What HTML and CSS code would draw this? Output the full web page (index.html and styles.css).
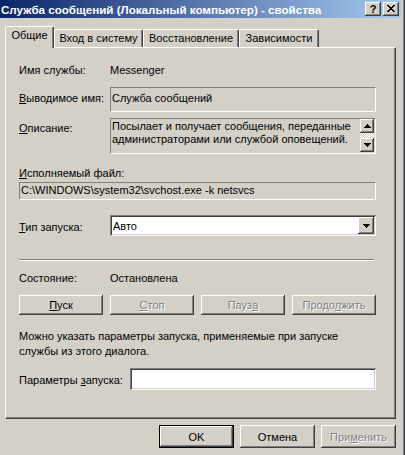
FILE: index.html
```html
<!DOCTYPE html>
<html lang="ru">
<head>
<meta charset="utf-8">
<title>Служба сообщений - свойства</title>
<link rel="stylesheet" href="styles.css">
</head>
<body>
<div class="window">
  <div class="titlebar">
    <span class="title">Служба сообщений (Локальный компьютер) - свойства</span>
    <div class="caption-btns">
      <div class="cbtn help">?</div>
      <div class="cbtn close">
        <svg width="8" height="7" viewBox="0 0 8 7" shape-rendering="crispEdges"><path d="M0 0h2v1h-2zM6 0h2v1h-2zM1 1h2v1h-2zM5 1h2v1h-2zM2 2h4v1h-4zM3 3h2v1h-2zM2 4h4v1h-4zM1 5h2v1h-2zM5 5h2v1h-2zM0 6h2v1h-2zM6 6h2v1h-2z" fill="#000"/></svg>
      </div>
    </div>
  </div>
  <div class="client">
    <div class="tabs">
      <div class="tab active t1">Общие</div>
      <div class="tab t2">Вход в систему</div>
      <div class="tab t3">Восстановление</div>
      <div class="tab t4">Зависимости</div>
    </div>
    <div class="panel">
      <div class="row r-name">
        <div class="label">Имя службы:</div>
        <div class="value">Messenger</div>
      </div>
      <div class="row r-display">
        <div class="label pt4"><u>В</u>ыводимое имя:</div>
        <div class="field ro display">Служба сообщений</div>
      </div>
      <div class="row r-desc">
        <div class="label pt3"><u>О</u>писание:</div>
        <div class="field ro desc">
          <div class="desc-text">Посылает и получает сообщения, переданные администраторами или службой оповещений.</div>
          <div class="vscroll">
            <div class="sbtn"><svg width="7" height="4" viewBox="0 0 7 4" shape-rendering="crispEdges"><path d="M3 0h1v1h-1zM2 1h3v1h-3zM1 2h5v1h-5zM0 3h7v1h-7z" fill="#000"/></svg></div>
            <div class="track"></div>
            <div class="sbtn"><svg width="7" height="4" viewBox="0 0 7 4" shape-rendering="crispEdges"><path d="M0 0h7v1h-7zM1 1h5v1h-5zM2 2h3v1h-3zM3 3h1v1h-1z" fill="#000"/></svg></div>
          </div>
        </div>
      </div>
      <div class="row r-exe-label">
        <div><u>И</u>сполняемый файл:</div>
      </div>
      <div class="field ro exe">C:\WINDOWS\system32\svchost.exe -k netsvcs</div>
      <div class="row r-type">
        <div class="label pt5"><u>Т</u>ип запуска:</div>
        <div class="combo">
          <span class="combo-text">Авто</span>
          <div class="dropbtn"><svg width="7" height="4" viewBox="0 0 7 4" shape-rendering="crispEdges"><path d="M0 0h7v1h-7zM1 1h5v1h-5zM2 2h3v1h-3zM3 3h1v1h-1z" fill="#000"/></svg></div>
        </div>
      </div>
      <div class="separator"></div>
      <div class="row r-status">
        <div class="label">Состояние:</div>
        <div class="value">Остановлена</div>
      </div>
      <div class="row r-actions">
        <div class="btn svc"><span><u>П</u>уск</span></div>
        <div class="btn svc disabled"><span><u>С</u>топ</span></div>
        <div class="btn svc disabled"><span>Пауз<u>а</u></span></div>
        <div class="btn svc disabled"><span>Продо<u>л</u>жить</span></div>
      </div>
      <p class="hint">Можно указать параметры запуска, применяемые при запуске службы из этого диалога.</p>
      <div class="row r-params">
        <div class="label-params">Параметры <u>з</u>апуска:</div>
        <div class="edit params"></div>
      </div>
    </div>
    <div class="footer">
      <div class="btn dlg default"><span>OK</span></div>
      <div class="btn dlg"><span>Отмена</span></div>
      <div class="btn dlg disabled"><span>При<u>м</u>енить</span></div>
    </div>
  </div>
</div>
</body>
</html>
```
FILE: styles.css
```css
* { box-sizing: border-box; }
html, body { margin: 0; padding: 0; }
body {
  width: 405px;
  height: 455px;
  overflow: hidden;
  background: #D4D0C8;
  font-family: "Liberation Sans", Arial, sans-serif;
  font-size: 11px;
  color: #000;
}
u { text-decoration: underline; text-underline-offset: 1px; }

.window {
  width: 405px;
  height: 455px;
  background: #D4D0C8;
  border-right: 1px solid #404040;
  box-shadow: inset -1px 0 #808080;
  padding-right: 3px;
}

.titlebar {
  height: 18px;
  display: flex;
  align-items: center;
  padding-left: 1px;
  padding-right: 2px;
  background: linear-gradient(to right, #0A246A, #A6CAF0);
  color: #fff;
}
.title {
  font-weight: bold;
  font-size: 11.6px;
  white-space: nowrap;
  flex: 1;
  overflow: hidden;
}
.caption-btns { display: flex; gap: 2px; }
.cbtn {
  width: 16px;
  height: 14px;
  background: #D4D0C8;
  box-shadow: inset -1px -1px #404040, inset 1px 1px #FFFFFF, inset -2px -2px #808080, inset 2px 2px #D4D0C8;
  display: flex;
  align-items: center;
  justify-content: center;
  color: #000;
  font-weight: bold;
  font-size: 11px;
  line-height: 14px;
}
.cbtn.help { padding-bottom: 1px; }
.cbtn svg { display: block; margin-top: -1px; }

.client { padding-left: 5px; padding-top: 8px; }

.tabs { display: flex; align-items: flex-end; height: 21px; }
.tab {
  position: relative;
  height: 18px;
  border-top: 1px solid #fff;
  border-left: 1px solid #fff;
  border-right: 1px solid #404040;
  box-shadow: inset -1px 0 #808080;
  border-top-left-radius: 2px;
  border-top-right-radius: 2px;
  text-align: center;
  line-height: 16px;
  white-space: nowrap;
}
.tab.active {
  height: 22px;
  margin-bottom: -1px;
  z-index: 1;
  background: #D4D0C8;
  line-height: 17px;
}
.t1 { width: 49px; }
.t2 { width: 89px; }
.t3 { width: 96px; }
.t4 { width: 80px; }

.panel {
  width: 391px;
  border-top: 1px solid #fff;
  border-left: 1px solid #fff;
  border-right: 1px solid #404040;
  border-bottom: 1px solid #404040;
  box-shadow: inset -1px -1px #808080;
  padding: 15px 19px 28px 13px;
}

.row { display: flex; align-items: flex-start; }
.label { width: 91px; flex: none; line-height: 14px; white-space: nowrap; }
.value { line-height: 14px; }
.pt3 { padding-top: 3px; }
.pt4 { padding-top: 4px; }
.pt5 { padding-top: 5px; }

.r-name { height: 14px; }

.field.ro {
  border-top: 1px solid #808080;
  border-left: 1px solid #808080;
  border-bottom: 1px solid #fff;
  border-right: 1px solid #fff;
  background: #D4D0C8;
}
.r-display { margin-top: 10px; }
.display { width: 266px; height: 25px; padding: 3px 1px; line-height: 14px; }

.r-desc { margin-top: 6px; }
.desc { width: 266px; height: 36px; display: flex; }
.desc-text { flex: 1; padding: 1px 1px; line-height: 13px; }
.vscroll { width: 14px; margin-right: 1px; display: flex; flex-direction: column; }
.sbtn {
  width: 14px;
  height: 14px;
  background: #D4D0C8;
  box-shadow: inset -1px -1px #404040, inset 1px 1px #FFFFFF, inset -2px -2px #808080, inset 2px 2px #D4D0C8;
  display: flex;
  align-items: center;
  justify-content: center;
}
.sbtn svg { display: block; }
.track {
  height: 5px;
  background: repeating-conic-gradient(#fff 0 25%, #D4D0C8 0 50%) 0 0 / 2px 2px;
}

.r-exe-label { margin-top: 12px; height: 14px; line-height: 14px; }
.exe { margin-top: 2px; width: 357px; height: 18px; padding: 0 1px; line-height: 15px; }

.r-type { margin-top: 15px; }
.combo {
  width: 266px;
  height: 21px;
  background: #fff;
  box-shadow: inset 1px 1px #808080, inset -1px -1px #FFFFFF, inset 2px 2px #404040, inset -2px -2px #D4D0C8;
  padding: 2px;
  display: flex;
}
.combo-text { flex: 1; padding: 2px 1px 0; line-height: 14px; }
.dropbtn {
  width: 16px;
  height: 17px;
  background: #D4D0C8;
  box-shadow: inset -1px -1px #404040, inset 1px 1px #FFFFFF, inset -2px -2px #808080, inset 2px 2px #D4D0C8;
  display: flex;
  align-items: center;
  justify-content: center;
}
.dropbtn svg { display: block; }

.separator {
  margin-top: 23px;
  width: 355px;
  height: 2px;
  border-top: 1px solid #808080;
  border-bottom: 1px solid #fff;
}

.r-status { margin-top: 10px; height: 14px; }

.r-actions { margin-top: 10px; justify-content: space-between; }

.btn {
  background: #D4D0C8;
  box-shadow: inset -1px -1px #404040, inset 1px 1px #FFFFFF, inset -2px -2px #808080, inset 2px 2px #D4D0C8;
  display: flex;
  align-items: center;
  justify-content: center;
  white-space: nowrap;
}
.btn.svc { width: 84px; height: 20px; }
.btn.disabled span { color: #808080; text-shadow: 1px 1px 0 #fff; }

.hint { margin: 14px 0 0; line-height: 15px; }

.r-params { margin-top: 9px; }
.label-params { width: 111px; flex: none; padding-top: 5px; line-height: 14px; white-space: nowrap; }
.edit {
  background: #fff;
  box-shadow: inset 1px 1px #808080, inset -1px -1px #FFFFFF, inset 2px 2px #404040, inset -2px -2px #D4D0C8;
}
.params { width: 246px; height: 22px; }

.footer {
  width: 391px;
  margin-top: 6px;
  display: flex;
  justify-content: flex-end;
  gap: 6px;
}
.btn.dlg { width: 75px; height: 23px; }
.btn.default {
  border: 1px solid #000;
}
```
